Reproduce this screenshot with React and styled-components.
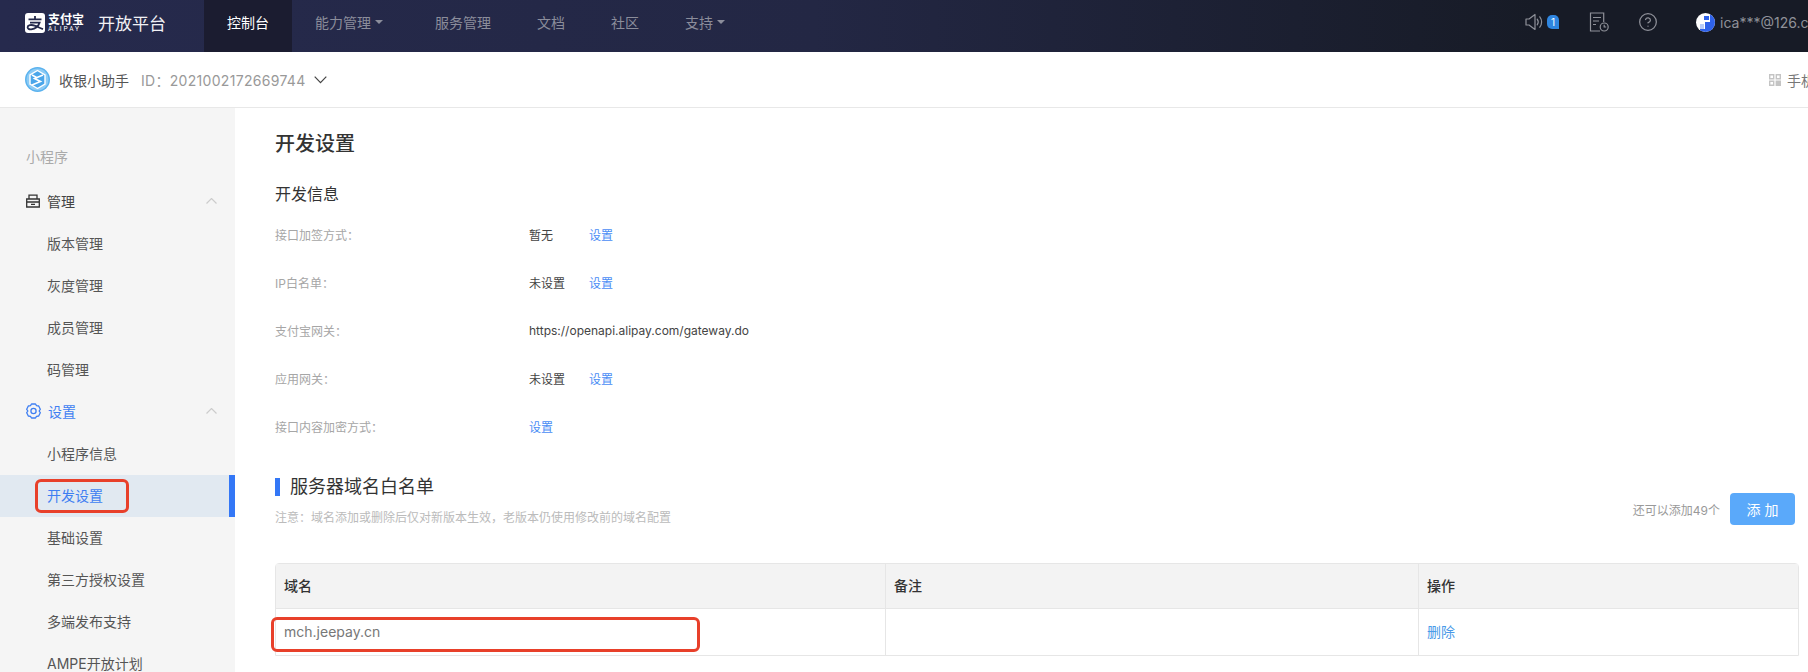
import React from 'react';
import styled, { createGlobalStyle } from 'styled-components';
import { CircleHelp } from 'lucide-react';

const GlobalStyle = createGlobalStyle`
	html, body {
		margin: 0;
		padding: 0;
		background: #fff;
	}
	body {
		font-family: Inter, "Noto Sans CJK SC", sans-serif;
		font-size: 14px;
		color: #333;
	}
	* {
		box-sizing: border-box;
	}
	svg {
		flex: none;
	}
`;

const Page = styled.div`
	width: 100%;
	height: 672px;
	display: flex;
	flex-direction: column;
	overflow: hidden;
`;

/* top navigation */
const TopBar = styled.header`
	flex: 0 0 52px;
	display: flex;
	background: linear-gradient(90deg, #262a4d 0%, #232744 45%, #171b26 85%);
`;

const Brand = styled.div`
	flex: 0 0 204px;
	display: flex;
	align-items: center;
	padding: 0 0 7px 25px;
`;

const BrandText = styled.div`
	margin-left: 3px;
	width: 50px;
	color: #fff;
	display: flex;
	flex-direction: column;
`;

const BrandCn = styled.span`
	font-size: 12px;
	line-height: 13px;
	font-weight: 700;
`;

const BrandEn = styled.span`
	font-family: Roboto, sans-serif;
	font-size: 6.5px;
	line-height: 7px;
	letter-spacing: 2px;
`;

const BrandTitle = styled.span`
	font-size: 17px;
	color: #f1f1f4;
`;

const NavItem = styled.a`
	display: flex;
	align-items: center;
	padding: 0 23px 9px;
	color: ${(p) => (p.$active ? '#fff' : '#8b8d9b')};
	background: ${(p) => (p.$active ? '#1b1c30' : 'transparent')};
`;

const Caret = styled.i`
	width: 0;
	height: 0;
	margin: 0 6px 0 4px;
	border-left: 4px solid transparent;
	border-right: 4px solid transparent;
	border-top: 4px solid #8b8d9b;
`;

const TopTools = styled.div`
	margin-left: auto;
	flex: 0 0 283px;
	display: flex;
	align-items: center;
	padding-bottom: 8px;
	overflow: hidden;
	color: #8f9199;
	white-space: nowrap;
`;

const Badge = styled.span`
	flex: 0 0 12px;
	height: 14px;
	margin: 0 30px 0 4px;
	border-radius: 5px 5px 0 5px;
	background: #2f86e0;
	color: #fff;
	font-size: 10px;
	line-height: 14px;
	text-align: center;
`;

const ToolIcon = styled.span`
	display: flex;
	flex: none;
	margin-right: ${(p) => p.$gap || 0}px;
`;

const UserName = styled.span`
	margin-left: 5px;
`;

/* app bar under the navigation */
const SubBar = styled.div`
	flex: 0 0 56px;
	display: flex;
	align-items: center;
	padding-left: 25px;
	border-bottom: 1px solid #e8e8e8;
`;

const AppName = styled.span`
	margin-left: 9px;
	color: #555;
`;

const AppId = styled.span`
	margin-left: 12px;
	color: #999;
	letter-spacing: 0.3px;
`;

const Preview = styled.div`
	margin-left: auto;
	flex: 0 0 39px;
	display: flex;
	align-items: center;
	overflow: hidden;
	white-space: nowrap;
	color: #777;
`;

const PreviewText = styled.span`
	margin-left: 6px;
`;

const Body = styled.div`
	flex: 1;
	display: flex;
	min-height: 0;
`;

/* sidebar */
const Sidebar = styled.aside`
	flex: 0 0 235px;
	padding-top: 39px;
	background: #f5f5f5;
	overflow: hidden;
`;

const SideCaption = styled.div`
	padding-left: 26px;
	margin-bottom: 14px;
	line-height: 20px;
	color: #aaa;
`;

const SideGroup = styled.div`
	height: 42px;
	display: flex;
	align-items: center;
	padding: 0 18px 2px 26px;
	color: ${(p) => (p.$active ? '#3f7ff2' : '#444')};
`;

const SideGroupLabel = styled.span`
	margin-left: 7px;
	margin-right: auto;
`;

const SideItem = styled.div`
	position: relative;
	height: 42px;
	display: flex;
	align-items: center;
	padding: 0 0 2px 47px;
	color: ${(p) => (p.$active ? '#3f7ff2' : '#555')};
	background: ${(p) => (p.$active ? '#e1e9f1' : 'transparent')};
	border-right: ${(p) => (p.$active ? '6px solid #3377f6' : '0')};
`;

const SideMark = styled.span`
	position: absolute;
	left: 35px;
	top: 4px;
	width: 94px;
	height: 34px;
	border: 3px solid #e8402a;
	border-radius: 6px;
`;

/* main column */
const Main = styled.main`
	flex: 1;
	min-width: 0;
	padding: 22px 9px 0 40px;
`;

const PageTitle = styled.h1`
	margin: 0;
	font-size: 20px;
	line-height: 28px;
	font-weight: 500;
	color: #333;
`;

const InfoTitle = styled.h2`
	margin: 24px 0 4px;
	font-size: 16px;
	line-height: 24px;
	font-weight: 400;
	color: #333;
`;

const InfoRow = styled.div`
	height: 48px;
	display: flex;
	align-items: center;
	font-size: 12px;
`;

const InfoLabel = styled.span`
	flex: 0 0 254px;
	color: #a6a6a6;
`;

const InfoValue = styled.span`
	flex: 0 0 ${(p) => (p.$wide ? 'auto' : '60px')};
	color: #444;
`;

const TextLink = styled.a`
	color: #4a8df5;
`;

const SectionHead = styled.div`
	margin-top: 25px;
	display: flex;
	justify-content: space-between;
`;

const SectionTitle = styled.h3`
	margin: 0 0 9px;
	font-size: 18px;
	line-height: 24px;
	font-weight: 400;
	color: #333;
	display: flex;
	align-items: center;
	&::before {
		content: '';
		width: 5px;
		height: 18px;
		margin-right: 10px;
		background: #3377f6;
	}
`;

const SectionNote = styled.p`
	margin: 0;
	font-size: 12px;
	line-height: 20px;
	color: #bbb;
`;

const AddGroup = styled.div`
	align-self: flex-end;
	margin: 0 4px 3px 0;
	display: flex;
	align-items: center;
	font-size: 12px;
	color: #999;
`;

const AddButton = styled.button`
	width: 65px;
	height: 32px;
	margin-left: 10px;
	border: 0;
	border-radius: 4px;
	background: #5aa9fa;
	color: #fff;
	font: inherit;
	font-size: 14px;
	letter-spacing: 4px;
	padding: 0 0 0 4px;
`;

const Table = styled.div`
	margin-top: 35px;
	border: 1px solid #e6e6e6;
	border-radius: 4px 4px 0 0;
`;

const TableRow = styled.div`
	position: relative;
	display: grid;
	grid-template-columns: 609px 533px 1fr;
	height: ${(p) => (p.$head ? '45px' : '46px')};
	background: ${(p) => (p.$head ? '#f3f3f3' : '#fff')};
	border-bottom: ${(p) => (p.$head ? '1px solid #e6e6e6' : '0')};
	color: ${(p) => (p.$head ? '#333' : '#777')};
	font-weight: ${(p) => (p.$head ? 500 : 400)};
`;

const TableCell = styled.div`
	display: flex;
	align-items: center;
	padding: 0 0 2px 8px;
	border-left: ${(p) => (p.$first ? '0' : '1px solid #e6e6e6')};
`;

const RowLink = styled.a`
	color: #4a9ae8;
`;

const RowMark = styled.span`
	position: absolute;
	left: -5px;
	top: 8px;
	width: 429px;
	height: 35px;
	border: 3px solid #e8402a;
	border-radius: 6px;
`;

const AlipayMark = () => (
	<svg width="20" height="20" viewBox="0 0 20 20" fill="none">
		<rect width="20" height="20" rx="3" fill="#fff" />
		<path
			d="M3.5 6.3h13M10 3v3.3M5 9.6h9.6c-1.2 3.6-4.6 6.2-8.4 6.7-2.3.2-3.6-.7-3.6-2 0-2 3.6-3 7-1.7 2.7 1.1 5.2 2.4 8.4 3.6"
			stroke="#252a4c"
			strokeWidth="1.8"
		/>
	</svg>
);

const SpeakerIcon = () => (
	<svg width="18" height="18" viewBox="0 0 18 18" fill="none" stroke="#8f9199" strokeWidth="1.2">
		<path d="M1 6h3l6-4.5v15L4 12H1z" strokeLinejoin="round" />
		<path d="M12.2 6.2c1.2 1.6 1.2 4 0 5.6M14.8 3.8c2.4 3 2.4 7.4 0 10.4" strokeLinecap="round" />
	</svg>
);

const RecordIcon = () => (
	<svg width="20" height="20" viewBox="0 0 20 20" fill="none" stroke="#8f9199" strokeWidth="1.2">
		<path d="M11 19H1.5V1h13.2v9" />
		<path d="M4 5.5h8M4 9h6M4 12.5h3" />
		<circle cx="15.2" cy="15" r="4" />
		<path d="M15.2 12.8V15h2" />
	</svg>
);

const AvatarIcon = () => (
	<svg width="19" height="19" viewBox="0 0 19 19">
		<defs>
			<clipPath id="avatarClip">
				<circle cx="9.5" cy="9.5" r="9.5" />
			</clipPath>
		</defs>
		<g clipPath="url(#avatarClip)">
			<rect width="19" height="19" fill="#fff" />
			<rect x="8" y="3" width="5" height="4" fill="#2f62ea" />
			<path d="M14 0h5v19H4v-3h5V9h5z" fill="#2f62ea" />
			<rect x="4" y="11" width="4" height="5" fill="#b9ccf8" />
		</g>
	</svg>
);

const AppLogo = () => (
	<svg width="25" height="25" viewBox="0 0 25 25" fill="none">
		<circle cx="12.5" cy="12.5" r="12.5" fill="#5ab2ee" />
		<circle cx="12.5" cy="12.5" r="11" fill="#8ccbf5" />
		<path d="M12.5 3.5l7.5 4.3v9.4l-7.5 4.3L5 17.2V7.8z" fill="#4aa6ea" stroke="#fff" strokeWidth="1.4" />
		<path d="M18 8l-8.5 3.5 6 3L7 18M7 8l5.5 3" stroke="#fff" strokeWidth="1.6" />
	</svg>
);

const ChevronDown = () => (
	<svg width="13" height="8" viewBox="0 0 13 8" fill="none" stroke="#444" strokeWidth="1.2" style={{ marginLeft: 8 }}>
		<path d="M.7.7l5.8 6 5.8-6" />
	</svg>
);

const ChevronUp = () => (
	<svg width="11" height="6" viewBox="0 0 11 6" fill="none" stroke="#ccc" strokeWidth="1.2">
		<path d="M.5 5.5l5-5 5 5" />
	</svg>
);

const BoxIcon = () => (
	<svg width="14" height="14" viewBox="0 0 14 14" fill="none" stroke="#333" strokeWidth="1.3">
		<path d="M.7 5h12.6v8H.7zM3 5V1.2h8V5M.7 8h12.6M5 10.3h4" />
	</svg>
);

const GearIcon = () => (
	<svg width="15" height="16" viewBox="0 0 15 16" fill="none" stroke="#3f7ff2" strokeWidth="1.3">
		<path d="M5.5 1h4l1 1.7 2.2.3 1.6 3.3-1.2 1.7 1.2 1.7-1.6 3.3-2.2.3-1 1.7h-4l-1-1.7-2.2-.3L.7 9.7 1.9 8 .7 6.3 2.3 3l2.2-.3z" strokeLinejoin="round" />
		<circle cx="7.5" cy="8" r="2.6" />
	</svg>
);

const QrIcon = () => (
	<svg width="12" height="12" viewBox="0 0 12 12" fill="#c4c4c4">
		<path d="M0 0h5.4v5.4H0zM1.4 1.4V4H4V1.4zM6.6 0H12v5.4H6.6zM8 1.4V4h2.6V1.4zM0 6.6h5.4V12H0zM1.4 8v2.6H4V8zM6.6 6.6H12V12H6.6z" fillRule="evenodd" />
	</svg>
);

const navItems = [
	{ label: '控制台', active: true },
	{ label: '能力管理', caret: true },
	{ label: '服务管理' },
	{ label: '文档' },
	{ label: '社区' },
	{ label: '支持', caret: true },
];

const manageItems = ['版本管理', '灰度管理', '成员管理', '码管理'];
const settingItems = ['小程序信息', '开发设置', '基础设置', '第三方授权设置', '多端发布支持', 'AMPE开放计划'];

const infoRows = [
	{ label: '接口加签方式：', value: '暂无', link: '设置' },
	{ label: 'IP白名单：', value: '未设置', link: '设置' },
	{ label: '支付宝网关：', value: 'https://openapi.alipay.com/gateway.do', wide: true },
	{ label: '应用网关：', value: '未设置', link: '设置' },
	{ label: '接口内容加密方式：', link: '设置' },
];

const App = () => {
	return (
		<Page>
			<GlobalStyle />
			<TopBar>
				<Brand>
					<AlipayMark />
					<BrandText>
						<BrandCn>支付宝</BrandCn>
						<BrandEn>ALIPAY</BrandEn>
					</BrandText>
					<BrandTitle>开放平台</BrandTitle>
				</Brand>
				{navItems.map((item) => (
					<NavItem key={item.label} $active={item.active}>
						{item.label}
						{item.caret && <Caret />}
					</NavItem>
				))}
				<TopTools>
					<SpeakerIcon />
					<Badge>1</Badge>
					<ToolIcon $gap={29}><RecordIcon /></ToolIcon>
					<ToolIcon $gap={38}><CircleHelp size={20} strokeWidth={1.5} /></ToolIcon>
					<AvatarIcon />
					<UserName>ica***@126.com</UserName>
				</TopTools>
			</TopBar>
			<SubBar>
				<AppLogo />
				<AppName>收银小助手</AppName>
				<AppId>ID：2021002172669744</AppId>
				<ChevronDown />
				<Preview>
					<QrIcon />
					<PreviewText>手机预览</PreviewText>
				</Preview>
			</SubBar>
			<Body>
				<Sidebar>
					<SideCaption>小程序</SideCaption>
					<SideGroup>
						<BoxIcon />
						<SideGroupLabel>管理</SideGroupLabel>
						<ChevronUp />
					</SideGroup>
					{manageItems.map((label) => (
						<SideItem key={label}>{label}</SideItem>
					))}
					<SideGroup $active>
						<GearIcon />
						<SideGroupLabel>设置</SideGroupLabel>
						<ChevronUp />
					</SideGroup>
					{settingItems.map((label) => (
						<SideItem key={label} $active={label === '开发设置'}>
							{label}
							{label === '开发设置' && <SideMark />}
						</SideItem>
					))}
				</Sidebar>
				<Main>
					<PageTitle>开发设置</PageTitle>
					<InfoTitle>开发信息</InfoTitle>
					{infoRows.map((row) => (
						<InfoRow key={row.label}>
							<InfoLabel>{row.label}</InfoLabel>
							{row.value && <InfoValue $wide={row.wide}>{row.value}</InfoValue>}
							{row.link && <TextLink>{row.link}</TextLink>}
						</InfoRow>
					))}
					<SectionHead>
						<div>
							<SectionTitle>服务器域名白名单</SectionTitle>
							<SectionNote>注意：域名添加或删除后仅对新版本生效，老版本仍使用修改前的域名配置</SectionNote>
						</div>
						<AddGroup>
							还可以添加49个
							<AddButton>添加</AddButton>
						</AddGroup>
					</SectionHead>
					<Table>
						<TableRow $head>
							<TableCell $first>域名</TableCell>
							<TableCell>备注</TableCell>
							<TableCell>操作</TableCell>
						</TableRow>
						<TableRow>
							<TableCell $first>mch.jeepay.cn</TableCell>
							<TableCell />
							<TableCell><RowLink>删除</RowLink></TableCell>
							<RowMark />
						</TableRow>
					</Table>
				</Main>
			</Body>
		</Page>
	);
};

export default App;
